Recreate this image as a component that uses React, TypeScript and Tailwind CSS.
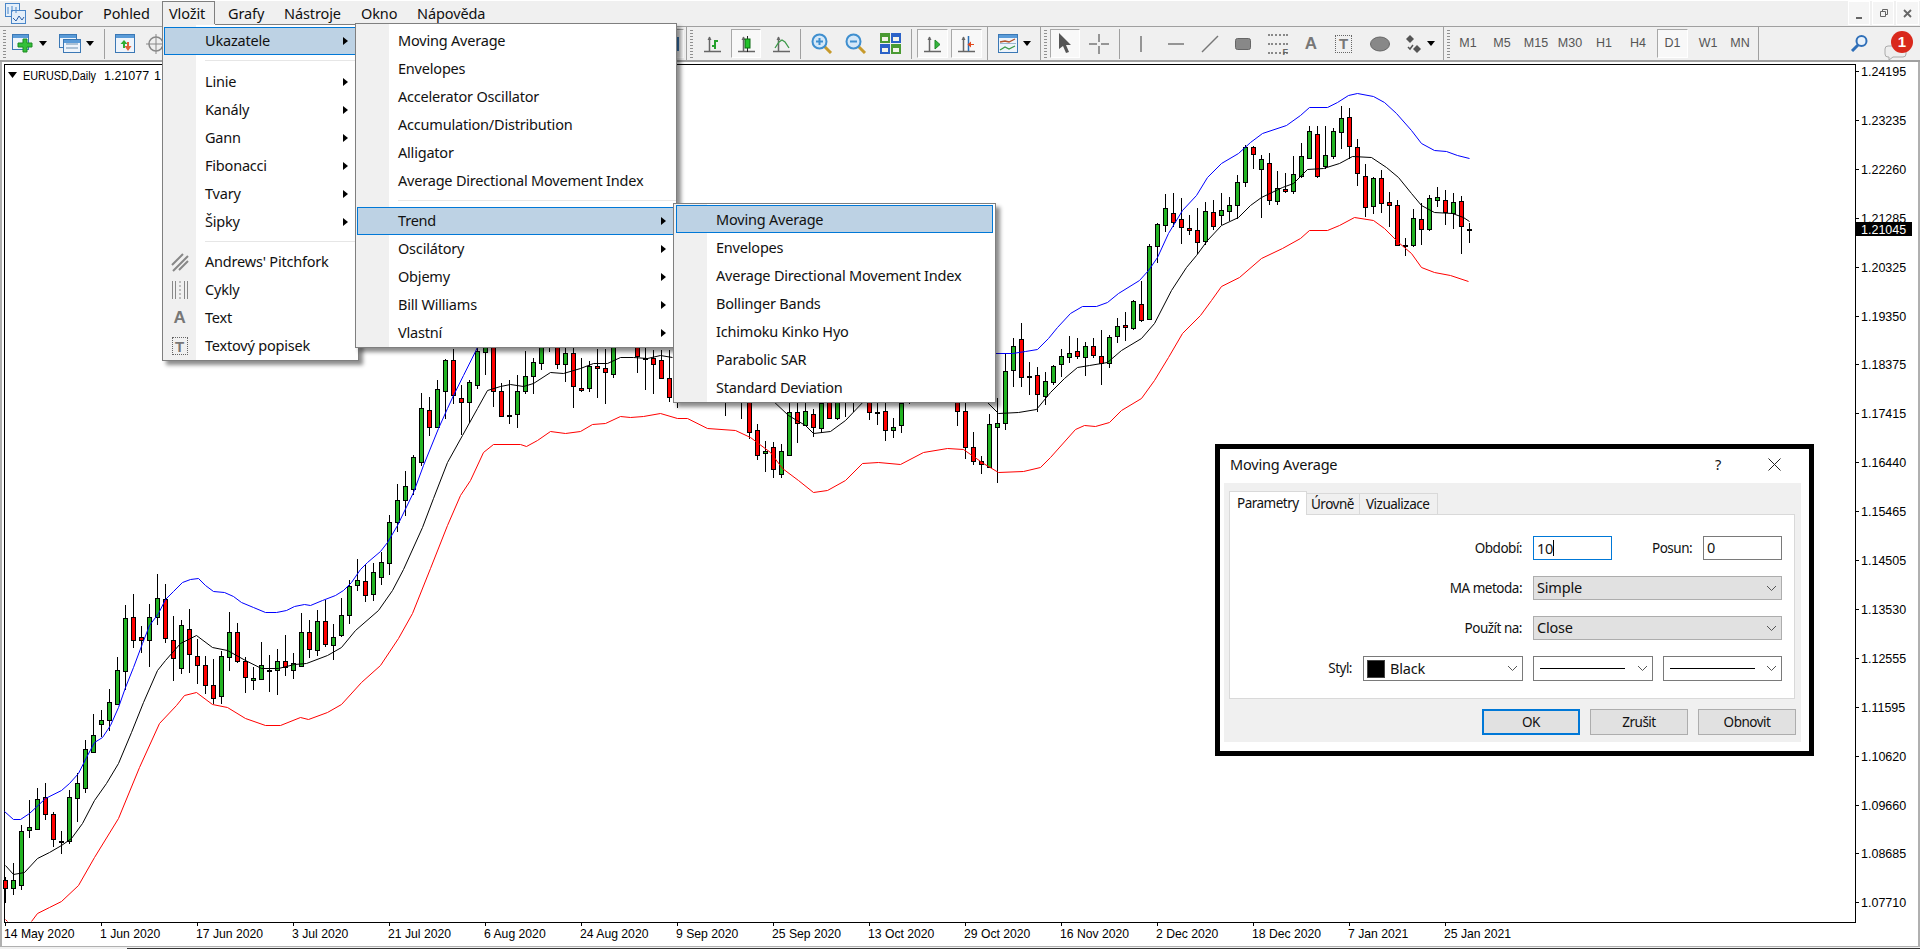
import type { ReactNode } from "react";

// [bar, 1 = up / 0 = down, body top, body bottom, high, low] in page pixels
type Bar = [number, number, number, number, number, number];
const bars: Bar[] = [
  [0,0,880,888,877,903],[1,1,880,888,863,895],[2,1,831,885,825,890],[3,1,827,830,800,838],[4,1,799,829,788,830],
  [5,0,797,814,783,820],[6,0,814,839,812,847],[7,0,841,841,831,854],[8,1,797,841,790,844],[9,1,783,798,773,822],
  [10,1,749,788,740,793],[11,1,735,752,714,753],[12,1,720,724,710,737],[13,1,702,720,689,731],[14,1,670,704,657,705],
  [15,1,618,671,605,690],[16,0,617,640,594,648],[17,0,637,640,626,653],[18,1,617,640,604,667],[19,1,598,617,574,625],
  [20,0,599,638,584,643],[21,0,640,658,616,681],[22,1,625,668,620,674],[23,0,629,654,609,673],[24,0,656,665,639,684],
  [25,0,665,685,656,694],[26,0,685,698,659,704],[27,1,656,696,651,704],[28,1,632,657,612,671],[29,0,632,661,623,663],
  [30,0,661,677,657,693],[31,1,678,680,667,690],[32,1,665,679,642,680],[33,1,670,670,655,692],[34,1,661,670,649,695],
  [35,0,661,667,635,676],[36,1,663,670,653,679],[37,1,632,666,613,667],[38,0,632,649,620,658],[39,1,621,650,610,656],
  [40,0,621,644,600,647],[41,1,637,645,624,660],[42,1,615,635,598,637],[43,1,586,615,580,624],[44,1,580,585,559,591],
  [45,0,581,595,565,602],[46,1,572,594,563,601],[47,1,562,577,552,585],[48,1,522,563,515,575],[49,1,500,522,484,532],
  [50,1,486,500,471,516],[51,1,457,489,455,495],[52,1,408,462,393,466],[53,0,410,427,397,436],[54,1,389,427,380,428],
  [55,1,360,391,359,419],[56,0,360,395,349,404],[57,0,398,402,385,435],[58,1,382,402,380,423],[59,1,351,385,340,389],
  [60,1,335,352,330,375],[61,0,335,391,330,407],[62,0,391,416,383,416],[63,1,415,415,380,424],[64,1,391,414,375,428],
  [65,1,376,391,351,394],[66,1,362,376,358,394],[67,1,335,363,330,370],[68,1,335,340,330,352],[69,0,335,364,330,369],
  [70,1,353,364,340,382],[71,0,353,386,340,408],[72,0,388,390,358,392],[73,1,366,388,361,392],[74,0,366,368,349,398],
  [75,0,368,372,349,404],[76,1,335,374,330,378],[79,0,335,356,330,373],[80,1,358,358,340,390],[81,0,358,364,350,394],
  [82,0,360,378,350,379],[83,0,378,397,350,402],[84,1,385,395,380,408],[90,1,390,400,380,416],[92,1,390,400,380,419],
  [93,0,380,432,375,439],[94,0,430,455,424,460],[95,1,451,453,441,472],[96,0,447,469,442,478],[97,1,451,474,444,478],
  [98,1,412,455,395,456],[99,0,412,423,395,443],[100,1,411,425,395,426],[101,0,414,427,409,437],[102,1,403,428,395,433],
  [103,0,390,418,385,419],[104,1,390,418,385,420],[105,1,390,400,385,417],[106,1,390,400,385,412],[108,0,390,412,385,420],
  [109,1,412,412,395,425],[110,0,411,430,395,441],[111,1,427,430,418,438],[112,1,403,425,395,433],[113,1,390,395,385,404],
  [119,0,390,411,385,426],[120,0,411,447,395,459],[121,0,447,461,432,465],[122,0,461,464,456,474],[123,1,424,467,414,467],
  [124,1,423,427,398,483],[125,1,371,423,353,430],[126,1,346,370,338,387],[127,0,339,377,323,387],[128,1,376,376,362,395],
  [129,0,375,394,367,412],[130,1,381,396,372,405],[131,1,366,382,365,385],[132,1,356,364,349,377],[133,1,353,357,336,363],
  [134,0,351,356,338,359],[135,1,346,357,342,376],[136,0,346,355,338,358],[137,0,356,363,330,385],[138,1,337,363,335,368],
  [139,1,326,336,318,343],[140,0,325,327,312,341],[141,1,301,328,300,330],[142,0,304,320,281,322],[143,1,246,319,244,320],
  [144,1,224,246,223,263],[145,1,208,225,194,232],[146,0,213,222,193,227],[147,0,219,227,198,244],[148,0,228,230,215,235],
  [149,0,230,242,208,254],[150,1,211,241,202,245],[151,0,212,226,200,230],[152,1,210,215,193,225],[153,1,205,211,197,221],
  [154,1,182,205,175,219],[155,1,147,182,145,187],[156,0,147,154,146,169],[157,1,159,169,155,218],[158,0,163,200,153,205],
  [159,1,188,201,171,205],[160,0,189,191,173,193],[161,1,174,191,156,194],[162,1,156,176,143,178],[163,1,131,158,126,159],
  [164,0,134,176,126,178],[165,1,155,166,126,169],[166,1,131,156,128,159],[167,1,118,132,106,149],[168,0,117,146,108,159],
  [169,0,147,173,139,186],[170,0,176,207,164,217],[171,1,178,206,177,214],[172,0,178,203,170,213],[173,0,202,205,192,227],
  [174,0,205,245,200,245],[175,1,245,245,238,256],[176,1,218,245,209,247],[177,0,219,229,203,245],[178,1,198,229,195,231],
  [179,1,197,200,187,207],[180,0,200,212,190,225],[181,1,202,213,193,229],[182,0,201,226,196,254],[183,1,229,229,223,243],
];

const blueLines = [
  "4,811 13,819 20,819 29,813 45,798 61,790 69,783 78,773 86,757 94,742 102,737 110,725 118,707 125,687 133,667 142,643 149,625 158,613 165,599 173,591 182,582 190,579 198,578 205,585 213,591 224,592 233,596 241,602 253,607 265,612 276,612 286,610 294,606 304,604 310,605 322,600 335,595 343,590 351,582 360,569 367,562 380,551 387,542 397,525 413,492 423,465 438,428 447,408 453,395 463,375 475,351 480,340",
  "995,353 1012,353 1025,351 1037,349 1048,338 1057,327 1070,313 1082,306 1096,306 1107,302 1118,293 1139,280 1148,270 1157,257 1168,233 1182,210 1196,195 1207,177 1221,163 1238,153 1250,142 1262,133 1286,125 1300,115 1309,107 1327,107 1337,102 1348,95 1357,93 1373,96 1384,102 1396,113 1411,130 1421,143 1434,150 1446,151 1457,155 1469,158",
];
const blackLines = [
  "5,865 13,874 24,872 37,858 49,852 61,845 71,838 82,823 94,800 106,783 118,763 131,732 143,702 157,670 165,660 180,643 196,635 212,647 227,650 245,660 261,668 278,668 294,664 306,663 327,655 341,647 355,630 378,610 392,590 403,569 422,527 433,498 447,462 462,435 477,408 487,390 500,386 510,384 523,386 533,383 550,372 563,373 580,368 593,363 607,363 620,357 633,357 647,358 660,355 672,357",
  "770,398 788,415 805,425 813,433 830,431 845,420 866,398",
  "983,398 998,413 1018,412 1036,409 1050,392 1064,378 1077,367 1089,365 1107,362 1121,350 1141,338 1154,323 1171,290 1186,267 1196,255 1207,240 1221,225 1238,217 1250,205 1261,197 1282,187 1293,183 1307,169 1323,168 1339,163 1352,156 1371,157 1386,167 1398,177 1411,193 1421,205 1434,212 1452,213 1463,217 1469,221",
];
const redLines = [
  "5,919 7,921",
  "31,921 37,913 49,907 61,901 78,885 94,857 118,818 139,767 159,723 176,705 184,695 196,692 212,704 227,707 245,718 265,725 280,725 300,717 308,719 327,712 341,704 361,682 380,665 398,638 412,613 430,568 447,525 460,495 470,480 483,452 493,444 520,444 526,446 537,440 550,431 565,433 580,431 592,424 605,423 620,416 630,417 643,416 660,413 677,418 687,418 707,428 735,430 750,437 770,452 782,468 798,480 813,492 827,490 845,480 862,463 878,462 900,464 923,452 947,448 963,449 983,463 998,472 1023,471 1040,467 1050,457 1075,429 1084,425 1095,426 1109,422 1121,410 1141,398 1154,380 1168,357 1182,333 1200,315 1211,300 1221,286 1239,277 1261,258 1282,248 1300,238 1309,230 1327,230 1339,225 1354,217 1373,220 1384,228 1398,242 1411,253 1421,267 1434,272 1450,275 1468,281",
];

const prices = ["1.24195","1.23235","1.22260","1.21285","1.20325","1.19350","1.18375","1.17415","1.16440","1.15465","1.14505","1.13530","1.12555","1.11595","1.10620","1.09660","1.08685","1.07710"];
const dates = ["14 May 2020","1 Jun 2020","17 Jun 2020","3 Jul 2020","21 Jul 2020","6 Aug 2020","24 Aug 2020","9 Sep 2020","25 Sep 2020","13 Oct 2020","29 Oct 2020","16 Nov 2020","2 Dec 2020","18 Dec 2020","7 Jan 2021","25 Jan 2021"];

function Chart() {
  return (
    <svg width={1916} height={885} viewBox="2 62 1916 885" className="block font-['Liberation_Sans',sans-serif] text-[12.5px]">
      <path d="M4.5 64.5H1855.5V922.5H4.5Z" fill="none" stroke="#000" shapeRendering="crispEdges" />
      {bars.map(([i, up, top, bottom, high, low]) => {
        const x = 5 + 8 * i;
        return (
          <g key={i} shapeRendering="crispEdges">
            <rect x={x} y={high} width={1} height={low - high} fill="#000" />
            {top === bottom ? (
              <rect x={x - 2} y={top} width={5} height={2} fill="#000" />
            ) : (
              <rect x={x - 1.5} y={top + 0.5} width={4} height={bottom - top} fill={up ? "#22b322" : "#ff0000"} stroke="#000" />
            )}
          </g>
        );
      })}
      <g fill="none" strokeLinejoin="round" strokeWidth={1} transform="translate(0.5 0.5)">
        {blueLines.map((p) => <polyline key={p} points={p} stroke="#0000ff" />)}
        {blackLines.map((p) => <polyline key={p} points={p} stroke="#000" />)}
        {redLines.map((p) => <polyline key={p} points={p} stroke="#ff0000" />)}
      </g>
      <path d="M8 72h9l-4.500 6z" fill="#000" />
      <text x={23} y={79.500} fill="#000" textLength={73} lengthAdjust="spacingAndGlyphs">EURUSD,Daily</text>
      <text x={104} y={79.500} fill="#000">1.21077</text>
      <text x={154} y={79.500} fill="#000">1</text>
      {prices.map((p, k) => {
        const y = Math.round(71 + 48.9 * k);
        return (
          <g key={p}>
            <rect x={1855} y={y} width={4} height={1} fill="#000" shapeRendering="crispEdges" />
            <text x={1861} y={y + 5} fill="#000">{p}</text>
          </g>
        );
      })}
      <rect x={1856} y={222} width={56} height={14} fill="#000" />
      <text x={1861} y={234} fill="#fff">1.21045</text>
      {dates.map((d, k) => (
        <g key={d}>
          <rect x={5 + 96 * k} y={922} width={1} height={4} fill="#000" shapeRendering="crispEdges" />
          <text x={4 + 96 * k} y={938} fill="#000" className="text-[12.2px]">{d}</text>
        </g>
      ))}
    </svg>
  );
}

function Ico({ w = 20, h = 20, children }: { w?: number; h?: number; children: ReactNode }) {
  return <svg width={w} height={h} viewBox={`0 0 ${w} ${h}`} fill="none" className="shrink-0">{children}</svg>;
}

const Axes = () => (
  <>
    <path d="M5.500 2V17" stroke="#666" strokeWidth={1.500} />
    <path d="M3.500 5l2-3.500 2 3.500z" fill="#666" />
    <path d="M0 16.500H17" stroke="#666" strokeWidth={1.500} />
  </>
);

function Win({ x = 0, y = 0, w = 18, h = 16 }: { x?: number; y?: number; w?: number; h?: number }) {
  return (
    <>
      <rect x={x + 0.5} y={y + 0.5} width={w} height={h} fill="#eef4fb" stroke="#3b78b5" />
      <rect x={x + 1} y={y + 1} width={w - 1} height={3} fill="#5a9bd8" />
    </>
  );
}

function Arrowdrop({ className = "" }: { className?: string }) {
  return <span className={`w-0 h-0 shrink-0 border-x-[4px] border-t-[5px] border-x-transparent border-t-black ${className}`} />;
}

const Sep = ({ className = "" }: { className?: string }) => <span className={`w-px shrink-0 bg-[#a0a0a0] ${className}`} />;
const Grip = ({ className = "" }: { className?: string }) => (
  <span className={`w-[3px] h-[28px] shrink-0 bg-[repeating-linear-gradient(to_bottom,#909090_0,#909090_1px,transparent_1px,transparent_3px)] ${className}`} />
);

function Pressed({ className = "", children }: { className?: string; children: ReactNode }) {
  return (
    <span className={`h-[29px] flex items-center justify-center shrink-0 border border-t-[#a8a8a8] border-l-[#a8a8a8] border-r-white border-b-white bg-[#f8f8f8] ${className}`}>
      {children}
    </span>
  );
}

function Tf({ label, className = "w-[34px]" }: { label: string; className?: string }) {
  return <span className={`text-center text-[#555] text-[12.5px] tracking-normal font-['Liberation_Sans',sans-serif] shrink-0 ${className}`}>{label}</span>;
}

function Magnifier({ sign }: { sign: "+" | "-" }) {
  return (
    <Ico w={22} h={21}>
      <path d="M13 13l7 7" stroke="#c79a2c" strokeWidth={3} />
      <circle cx={8.500} cy={8.500} r={7} fill="#d5e8f8" stroke="#3f8fcf" strokeWidth={2} />
      <path d={sign === "+" ? "M5 8.500h7M8.500 5v7" : "M5 8.500h7"} stroke="#3f8fcf" strokeWidth={2} />
    </Ico>
  );
}

function Toolbar() {
  return (
    <div className="h-[35px] flex items-center bg-[#f0f0f0] border-b-2 border-[#a0a0a0] shrink-0">
      <Grip className="ml-[3px]" />
      <span className="ml-[6px] shrink-0">
        <Ico w={22} h={19}>
          <Win w={16} h={15} />
          <path d="M11 5h4v4h5v4h-5v5h-4v-5H6V9h5z" fill="#34c038" stroke="#1c8a22" />
        </Ico>
      </span>
      <Arrowdrop className="ml-[5px]" />
      <span className="ml-[12px] shrink-0">
        <Ico w={22} h={19}>
          <Win w={17} h={13} />
          <Win x={4} y={5} w={17} h={13} />
          <path d="M7 10h12M7 14h12" stroke="#6a8fb0" />
        </Ico>
      </span>
      <Arrowdrop className="ml-[5px]" />
      <Sep className="ml-[10px] h-[30px]" />
      <span className="ml-[10px] shrink-0">
        <Ico w={20} h={19}>
          <Win w={19} h={18} />
          <path d="M8 14V10H5.500L9 6l3.500 4H10v4z" fill="#2fae35" />
          <path d="M12 8v4H9.500l3.500 5 3.500-5H14V8z" fill="#e2603a" />
        </Ico>
      </span>
      <span className="ml-[11px] shrink-0">
        <Ico w={20} h={20}>
          <circle cx={10} cy={10} r={7} stroke="#888" strokeWidth={1.500} />
          <path d="M10 0v20M0 10h20" stroke="#888" />
        </Ico>
      </span>
      <Pressed className="ml-[488px] w-[30px]">
        <span className="ml-auto mr-[4px] w-[4px] h-[14px] bg-[#3b78b5]" />
      </Pressed>
      <Sep className="ml-[2px] h-[33px]" />
      <Grip className="ml-[3px]" />
      <span className="ml-[11px] shrink-0">
        <Ico w={17} h={18}><Axes /><path d="M11 14V6h3M8 11h3" stroke="#24a02c" strokeWidth={2} /></Ico>
      </span>
      <Pressed className="ml-[10px] w-[30px]">
        <Ico w={17} h={18}><Axes /><path d="M9.500 1v16" stroke="#222" /><rect x={7} y={4} width={5} height={9} fill="#22c32a" stroke="#0d6b12" /></Ico>
      </Pressed>
      <span className="ml-[12px] shrink-0">
        <Ico w={17} h={18}><Axes /><path d="M2 13l4-6 3-2 3 2 4 6" stroke="#3c9a48" strokeWidth={1.300} /></Ico>
      </span>
      <Sep className="ml-[10px] h-[30px]" />
      <span className="ml-[10px] shrink-0"><Magnifier sign="+" /></span>
      <span className="ml-[12px] shrink-0"><Magnifier sign="-" /></span>
      <span className="ml-[13px] shrink-0">
        <Ico w={21} h={21}>
          <rect width={10} height={10} fill="#4a9a32" /><rect x={11} width={10} height={10} fill="#2b62c8" />
          <rect y={11} width={10} height={10} fill="#2b62c8" /><rect x={11} y={11} width={10} height={10} fill="#4a9a32" />
          <path d="M2 4h6v4H2zM13 4h6v4h-6zM2 15h6v4H2zM13 15h6v4h-6z" fill="#f4f4ea" />
        </Ico>
      </span>
      <Sep className="ml-[10px] h-[30px]" />
      <Pressed className="ml-[5px] w-[31px]">
        <Ico w={17} h={18}><Axes /><path d="M11 5l5 4.500-5 4.500z" fill="#34b53c" stroke="#1f8a28" /></Ico>
      </Pressed>
      <Pressed className="ml-[3px] w-[31px]">
        <Ico w={17} h={18}><Axes /><path d="M10.500 1v15" stroke="#2a6fb5" strokeWidth={1.500} /><path d="M16 9h-3V6.500L9.500 9.500 13 12.500V10h3z" fill="#e24a1e" /></Ico>
      </Pressed>
      <Sep className="ml-[5px] h-[33px]" />
      <span className="ml-[10px] shrink-0">
        <Ico w={20} h={19}>
          <rect x={0.500} y={0.500} width={19} height={18} fill="#eef4fb" stroke="#3b78b5" />
          <rect x={1} y={1} width={18} height={3} fill="#5a9bd8" />
          <path d="M2 9.500h16" stroke="#9db8d0" />
          <path d="M2 8l5-1 4 1 6-3" stroke="#b5532a" strokeWidth={1.300} />
          <path d="M2 16l5-3 4 2 6-3" stroke="#3c9a48" strokeWidth={1.300} />
        </Ico>
      </span>
      <Arrowdrop className="ml-[5px]" />
      <Sep className="ml-[9px] h-[33px]" />
      <Grip className="ml-[3px]" />
      <Pressed className="ml-[3px] w-[30px]">
        <Ico w={14} h={21}><path d="M1 0v16l4-3 3 7 3-1-3-7h5z" fill="#555" /></Ico>
      </Pressed>
      <span className="ml-[9px] shrink-0">
        <Ico w={20} h={20}><path d="M10 0v8M10 12v8M0 10h8M12 10h8" stroke="#777" strokeWidth={1.500} /></Ico>
      </span>
      <Sep className="ml-[10px] h-[30px]" />
      <span className="ml-[11px] shrink-0"><Ico w={20} h={20}><path d="M10 2v16" stroke="#777" strokeWidth={1.500} /></Ico></span>
      <span className="ml-[15px] shrink-0"><Ico w={20} h={20}><path d="M2 10h16" stroke="#777" strokeWidth={1.500} /></Ico></span>
      <span className="ml-[14px] shrink-0"><Ico w={20} h={20}><path d="M2 18L18 2" stroke="#777" strokeWidth={1.500} /></Ico></span>
      <span className="ml-[13px] shrink-0"><Ico w={20} h={20}><rect x={2.500} y={4.500} width={15} height={11} rx={2} fill="#888" stroke="#666" /></Ico></span>
      <span className="ml-[15px] w-[20px] h-[20px] flex flex-col justify-between relative shrink-0">
        <span className="border-t-2 border-dotted border-[#888]" />
        <span className="border-t-2 border-dotted border-[#888]" />
        <span className="border-t-2 border-dotted border-[#888]" />
        <span className="absolute right-0 bottom-[-3px] text-[9px] leading-none font-bold text-[#666] font-['Liberation_Sans',sans-serif]">F</span>
      </span>
      <span className="ml-[13px] w-[20px] shrink-0 text-center text-[#777] text-[17px] leading-none font-bold font-['Liberation_Sans',sans-serif]">A</span>
      <span className="ml-[14px] w-[17px] h-[18px] shrink-0 mr-[3px] flex items-center justify-center border border-dotted border-[#666] text-[#777] text-[15px] leading-none font-bold font-['Liberation_Sans',sans-serif]">T</span>
      <span className="ml-[15px] shrink-0"><Ico w={20} h={16}><ellipse cx={10} cy={8} rx={9.500} ry={7} fill="#888" stroke="#666" /></Ico></span>
      <span className="ml-[14px] shrink-0">
        <Ico w={20} h={20}>
          <path d="M6 1l4 4-4 4-4-4zM13 11l4 4-4 4-4-4z" fill="#555" />
          <path d="M4 13l2 2 3-4" stroke="#555" strokeWidth={1.500} />
        </Ico>
      </span>
      <Arrowdrop className="ml-[3px]" />
      <Sep className="ml-[8px] h-[33px]" />
      <Grip className="ml-[3px]" />
      <Tf label="M1" className="w-[34px] ml-px" />
      <Tf label="M5" />
      <Tf label="M15" />
      <Tf label="M30" />
      <Tf label="H1" />
      <Tf label="H4" />
      <Pressed className="ml-[2px] w-[31px] text-[#555] text-[12.5px] font-['Liberation_Sans',sans-serif]">D1</Pressed>
      <Tf label="W1" className="w-[34px] ml-[3px]" />
      <Tf label="MN" className="w-[30px]" />
      <Sep className="ml-[3px] h-[33px]" />
      <span className="ml-[91px] shrink-0">
        <Ico w={19} h={17}>
          <circle cx={11.500} cy={6} r={5} fill="#e9f2fb" stroke="#2f6fb8" strokeWidth={2} />
          <path d="M8 10l-6 6" stroke="#2f6fb8" strokeWidth={3} />
        </Ico>
      </span>
      <span className="ml-[15px] relative w-[23px] h-[16px] mt-[18px] shrink-0">
        <Ico w={23} h={16}><path d="M4 1h15a3 3 0 013 3v5a3 3 0 01-3 3H9l-4 3v-3H4a3 3 0 01-3-3V4a3 3 0 013-3z" fill="#eee" stroke="#aaa" /></Ico>
        <span className="absolute left-[7px] top-[-14px] w-[22px] h-[22px] rounded-full bg-[#d9291c] text-white text-[15px] leading-[22px] text-center font-bold font-['Liberation_Sans',sans-serif]">1</span>
      </span>
    </div>
  );
}

function MenuBar() {
  return (
    <div className="h-[27px] flex items-center bg-[#f0f0f0] border-t border-white border-b border-b-[#a0a0a0] shrink-0 text-[14.5px] tracking-[-0.1px] text-[#111]">
      <span className="w-[34px] pl-[5px]">
        <Ico w={21} h={21}>
          <rect x={0.500} y={0.500} width={14} height={13} fill="#e4effa" stroke="#4a86c8" />
          <rect x={6.500} y={7.500} width={14} height={13} fill="#e4effa" stroke="#4a86c8" />
          <path d="M8 15l3 3 3-5 3 4 2-3" stroke="#2a5fa8" />
          <path d="M3 4v7M7 3v6M11 4v6" stroke="#4a86c8" />
        </Ico>
      </span>
      <span className="w-[69px]">Soubor</span>
      <span className="w-[59px]">Pohled</span>
      <span className="w-[53px] self-start h-[24px] pl-[6px] leading-[22px] border border-b-0 border-[#7f7f7f]">Vložit</span>
      <span className="w-[69px] pl-[13px]">Grafy</span>
      <span className="w-[77px]">Nástroje</span>
      <span className="w-[56px]">Okno</span>
      <span>Nápověda</span>
      <span className="ml-auto flex gap-[2px] pr-px self-start">
        <span className="w-[22px] h-[24px] flex items-end justify-center pb-[5px] bg-[#f5f5f5] border border-white"><span className="w-[6px] h-[2px] bg-[#666]" /></span>
        <span className="w-[22px] h-[24px] flex items-center justify-center bg-[#f5f5f5] border border-white">
          <Ico w={10} h={10}><path d="M2.500 2.500h5v5h-5zM4.500 2.500V.500h5v5h-2" stroke="#666" transform="translate(0 1)" /></Ico>
        </span>
        <span className="w-[23px] h-[24px] flex items-center justify-center bg-[#f5f5f5] border border-white">
          <Ico w={9} h={9}><path d="M1 1l7 7M8 1L1 8" stroke="#666" strokeWidth={1.800} /></Ico>
        </span>
      </span>
    </div>
  );
}

function Row({ label, active, arrow, indent, className = "" }: { label: string; active?: boolean; arrow?: boolean; indent: string; className?: string }) {
  return (
    <div className={`h-7 flex items-center border ${indent} ${active ? "bg-[#bdd2e4] border-[#0078d7]" : "border-transparent"} ${className}`}>
      <span className="flex-1">{label}</span>
      {arrow && <span className="mr-[8px] w-0 h-0 border-y-[4px] border-l-[5px] border-y-transparent border-l-black" />}
    </div>
  );
}

const Divider = ({ className }: { className: string }) => <div className={`h-px bg-[#e6e6e6] ${className}`} />;

const menuBox = "absolute bg-white border border-[#7f7f7f] shadow-[4px_4px_4px_rgba(0,0,0,0.45)] bg-[linear-gradient(to_right,#f0f0f0_33px,#fff_33px)] text-[14.5px] tracking-[-0.2px] text-[#111]";

function Menus() {
  return (
    <>
      <div className={`${menuBox} left-[162px] top-[24px] w-[197px] h-[337px] pt-[2px] z-10`}>
        <span className="absolute left-0 top-[-1px] w-[52px] h-px bg-[#f0f0f0]" />
        <Row label="Ukazatele" active arrow indent="pl-[40px] mx-[1px]" className="pb-[1px]" />
        <Divider className="ml-[42px] mt-[5px] mb-[7px]" />
        {["Linie", "Kanály", "Gann", "Fibonacci", "Tvary", "Šipky"].map((t) => (
          <Row key={t} label={t} arrow indent="pl-[40px] mx-[1px]" className="pb-[1px]" />
        ))}
        <Divider className="ml-[42px] mt-[5px] mb-[6px]" />
        <div className="relative">
          <div className="absolute left-0 top-0 w-[33px] flex flex-col items-center">
            <span className="h-7 flex items-center">
              <Ico w={18} h={20}><path d="M1 13L12 2M2 19L17 4M8 18L17 9" stroke="#888" strokeWidth={2} /></Ico>
            </span>
            <span className="h-7 flex items-center">
              <Ico w={18} h={22}><path d="M1.500 2v18M4.500 2v18M13.500 2v18M16.500 2v18" stroke="#888" /><path d="M9 2v18" stroke="#888" strokeDasharray="2 2" /></Ico>
            </span>
            <span className="h-7 flex items-center text-[#777] text-[17px] font-bold font-['Liberation_Sans',sans-serif]">A</span>
            <span className="h-7 flex items-center">
              <span className="w-[16px] h-[18px] flex items-center justify-center border border-dotted border-[#666] text-[#777] text-[15px] leading-none font-bold font-['Liberation_Sans',sans-serif]">T</span>
            </span>
          </div>
          {["Andrews' Pitchfork", "Cykly", "Text", "Textový popisek"].map((t) => (
            <Row key={t} label={t} indent="pl-[40px] mx-[1px]" className="pb-[1px]" />
          ))}
        </div>
      </div>

      <div className={`${menuBox} left-[355px] top-[23px] w-[322px] h-[325px] pt-[3px] z-20`}>
        {["Moving Average", "Envelopes", "Accelerator Oscillator", "Accumulation/Distribution", "Alligator", "Average Directional Movement Index"].map((t) => (
          <Row key={t} label={t} indent="pl-[40px] mx-[1px]" className="pb-[1px]" />
        ))}
        <Divider className="ml-[42px] mt-[5px] mb-[6px]" />
        <Row label="Trend" active arrow indent="pl-[40px] mx-[1px]" className="pb-[1px]" />
        {["Oscilátory", "Objemy", "Bill Williams", "Vlastní"].map((t) => (
          <Row key={t} label={t} arrow indent="pl-[40px] mx-[1px]" className="pb-[1px]" />
        ))}
      </div>

      <div className={`${menuBox} left-[673px] top-[203px] w-[323px] h-[200px] pt-[1px] z-30`}>
        <Row label="Moving Average" active indent="pl-[39px] ml-[2px] mr-[2px]" className="pt-[2px]" />
        {["Envelopes", "Average Directional Movement Index", "Bollinger Bands", "Ichimoku Kinko Hyo", "Parabolic SAR", "Standard Deviation"].map((t) => (
          <Row key={t} label={t} indent="pl-[39px] ml-[2px] mr-[2px]" className="pt-[2px]" />
        ))}
      </div>
    </>
  );
}

function Chevron() {
  return (
    <Ico w={11} h={7}><path d="M1 1l4.500 4.500L10 1" stroke="#555" /></Ico>
  );
}

function Select({ className, children }: { className: string; children: ReactNode }) {
  return (
    <div className={`flex items-center justify-between pr-[4px] border ${className}`}>
      {children}
      <Chevron />
    </div>
  );
}

const tight = "text-[13.5px] tracking-[-0.5px]";

function Dialog() {
  return (
    <div className="absolute left-[1215px] top-[444px] w-[599px] h-[312px] border-[5px] border-black bg-white z-40 text-[14.5px] tracking-[-0.2px] text-[#111]">
      <div className="h-[34px] flex items-center pl-[10px] pr-[28px] pb-[3px]">
        <span className="flex-1">Moving Average</span>
        <span className="mr-[47px]">?</span>
        <Ico w={13} h={13}><path d="M.5.5l12 12M12.500.5l-12 12" stroke="#222" /></Ico>
      </div>
      <div className="ml-[4px] w-[577px] h-[259px] bg-[#f0f0f0] pt-[8px] pl-[5px]">
        <div className={`flex items-end h-[23px] ${tight}`}>
          <span className="w-[78px] h-[24px] pl-[7px] pt-[1px] bg-white border border-b-0 border-[#d9d9d9] relative z-10 -mb-px">Parametry</span>
          <span className="w-[53px] h-[21px] pl-[4px] leading-[20px] border-t border-r border-[#d9d9d9]">Úrovně</span>
          <span className="w-[78px] h-[21px] pl-[6px] leading-[20px] border-t border-r border-[#d9d9d9]">Vizualizace</span>
        </div>
        <div className="w-[566px] h-[185px] bg-white border border-[#d9d9d9] pt-[21px]">
          <div className="flex items-center h-[24px]">
            <span className={`w-[292px] text-right ${tight}`}>Období:</span>
            <span className="ml-[11px] w-[79px] h-[24px] border border-[#0078d7] pl-[3px] leading-[20px] flex items-center">10<span className="w-px h-[16px] bg-black" /></span>
            <span className={`ml-[40px] w-[40px] text-right ${tight}`}>Posun:</span>
            <span className="ml-[11px] w-[79px] h-[24px] border border-[#7a7a7a] pl-[3px] flex items-center">0</span>
          </div>
          <div className="flex items-center h-[24px] mt-[16px]">
            <span className={`w-[292px] text-right ${tight}`}>MA metoda:</span>
            <Select className="ml-[11px] w-[249px] h-[24px] pl-[3px] bg-[#e1e1e1] border-[#adadad]">Simple</Select>
          </div>
          <div className="flex items-center h-[24px] mt-[16px]">
            <span className={`w-[292px] text-right ${tight}`}>Použít na:</span>
            <Select className="ml-[11px] w-[249px] h-[24px] pl-[3px] bg-[#e1e1e1] border-[#adadad]">Close</Select>
          </div>
          <div className="flex items-center h-[25px] mt-[16px]">
            <span className={`w-[122px] text-right ${tight}`}>Styl:</span>
            <Select className="ml-[11px] w-[160px] h-[25px] pl-[3px] border-[#7a7a7a]">
              <span className="flex items-center">
                <span className="w-[18px] h-[18px] bg-black border border-[#444] mr-[5px]" />Black
              </span>
            </Select>
            <Select className="ml-[10px] w-[120px] h-[25px] pl-[6px] border-[#7a7a7a]"><span className="w-[85px] h-px bg-black" /></Select>
            <Select className="ml-[10px] w-[119px] h-[25px] pl-[6px] border-[#7a7a7a]"><span className="w-[85px] h-px bg-black" /></Select>
          </div>
        </div>
        <div className={`flex justify-end gap-[10px] w-[567px] mt-[10px] ${tight}`}>
          <span className="w-[98px] h-[26px] flex items-center justify-center bg-[#e1e1e1] border-2 border-[#0078d7]">OK</span>
          <span className="w-[98px] h-[26px] flex items-center justify-center bg-[#e1e1e1] border border-[#adadad]">Zrušit</span>
          <span className="w-[98px] h-[26px] flex items-center justify-center bg-[#e1e1e1] border border-[#adadad]">Obnovit</span>
        </div>
      </div>
    </div>
  );
}

export default function App() {
  return (
    <div className="relative w-[1920px] h-[949px] overflow-hidden flex flex-col bg-[#f0f0f0] font-['Noto_Sans',sans-serif]">
      <MenuBar />
      <Toolbar />
      <div className="flex-1 bg-white border-l-2 border-r-2 border-[#b0b0b0] overflow-hidden">
        <Chart />
      </div>
      <div className="h-[3px] border-t border-[#b0b0b0] shrink-0">
        <div className="ml-[127px] mt-px h-px bg-[#333]" />
      </div>
      <Menus />
      <Dialog />
    </div>
  );
}
